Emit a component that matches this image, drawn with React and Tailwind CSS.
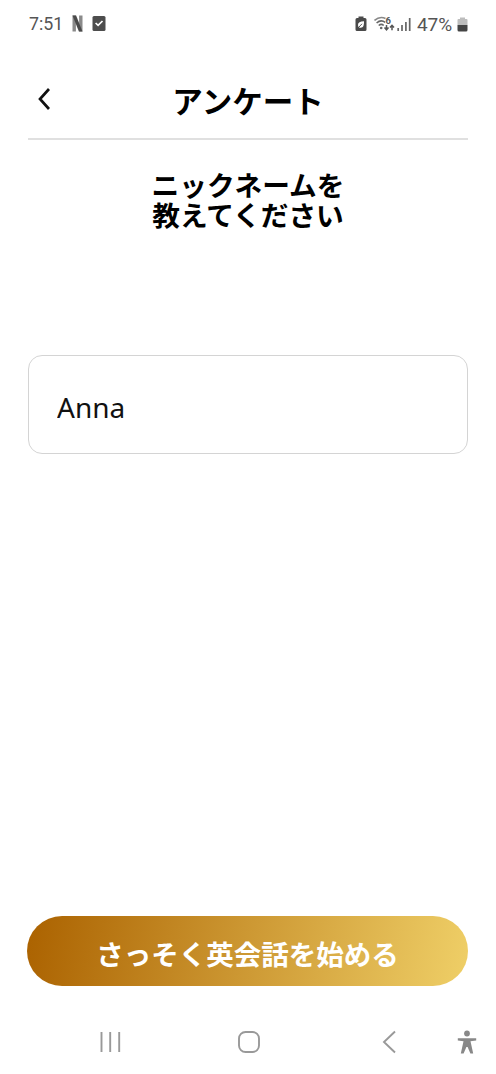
import React, { useState } from 'react';

const StatusBar = () => (
  <div className="h-[48px] pl-[29px] pr-[28px] flex items-center justify-between text-[#555555] font-['Roboto',sans-serif]">
    <div className="flex items-center">
      <span className="w-[43px] text-[17.8px] leading-none">7:51</span>
      <svg width="11" height="17" viewBox="0 0 11 17">
        <path d="M0.5 0.5h3.4v16H0.5zM7.100 0.500h3.400v16H7.100z" fill="#8a8a8a" />
        <path d="M0.5 0.5h3.600l6.400 16H6.900z" fill="#4a4a4a" />
      </svg>
      <svg className="ml-[9px]" width="14" height="17" viewBox="0 0 14 17">
        <rect x="0.5" y="1" width="13" height="15" rx="1.5" fill="#4d4d4d" />
        <path d="M3.6 8l2.5 2.4 4.4-4.4" fill="none" stroke="#fff" strokeWidth="1.7" />
      </svg>
    </div>
    <div className="flex items-center">
      <svg width="12" height="16" viewBox="0 0 12 16">
        <path d="M3.5 0.5h5v1.5H10a1.5 1.5 0 0 1 1.5 1.5v10A1.5 1.5 0 0 1 10 15H2a1.5 1.5 0 0 1-1.5-1.5v-10A1.5 1.5 0 0 1 2 2h1.5z" fill="#4a4a4a" />
        <path d="M9 5.3C5 5.3 3 6.5 3 9c0 2 1.200 2.800 2.600 2.800C8.500 11.800 9 9 9 5.300z" fill="#fff" />
        <path d="M2.8 12.3L7 7.8" stroke="#4a4a4a" strokeWidth="0.9" />
      </svg>
      <svg className="ml-[7px]" width="21" height="18" viewBox="0 0 21 18">
        <g fill="none" stroke="#888" strokeWidth="1.6">
          <path d="M0.5 5.500C4 2.300 8.500 2 11.500 3.500" />
          <path d="M2.6 8c2.800-2.500 6-2.500 8.600-0.700" stroke="#666" />
          <path d="M4.7 10.500c1.700-1.400 3.500-1.400 5 0" stroke="#666" />
        </g>
        <circle cx="7.2" cy="13" r="1.3" fill="#666" />
        <text x="11.6" y="8.500" fontSize="9.5" fontWeight="700" fill="#555">6</text>
        <path d="M12.500 10v4.500M10.500 12.600l2 2.200 2-2.200M18 15.200v-4.700M16 12.500l2-2.200 2 2.200" fill="none" stroke="#555" strokeWidth="1.5" />
      </svg>
      <svg className="ml-[2px]" width="14" height="15" viewBox="0 0 14 15">
        <path d="M1.2 11v3M5 8v6M8.9 5v9M12.7 1v13" stroke="#666" strokeWidth="1.7" />
      </svg>
      <span className="ml-[6px] w-[39px] text-[19px] leading-none tracking-[-0.1px]">47%</span>
      <svg className="ml-[1px]" width="11" height="15" viewBox="0 0 11 15">
        <path d="M3 0.5h5V2h1.500A1 1 0 0 1 10.500 3v5h-10V3a1 1 0 0 1 1-1H3z" fill="#bdbdbd" />
        <path d="M0.5 8h10v5a1.500 1.500 0 0 1-1.500 1.500H2A1.500 1.500 0 0 1 0.500 13z" fill="#444" />
      </svg>
    </div>
  </div>
);

const Header = () => (
  <header className="mx-[28px] h-[92px] grid grid-cols-[40px_1fr_40px] items-center border-b-2 border-[#e0e0e0]">
    <button type="button" aria-label="戻る" className="pl-[9px] pt-[11px]">
      <svg width="14" height="24" viewBox="0 0 14 24">
        <path d="M12 2L3 12l9 10" fill="none" stroke="#111" strokeWidth="2.7" />
      </svg>
    </button>
    <h1 className="mt-[14px] text-center text-[30.5px] leading-none font-bold">アンケート</h1>
  </header>
);

const NavigationBar = () => (
  <nav className="mt-[42px] h-[28px] pl-[99px] pr-[19px] flex items-center justify-between">
    <svg width="23" height="22" viewBox="0 0 23 22">
      <path d="M2.5 1v20M11.2 1v20M20.2 1v20" stroke="#999" strokeWidth="1.9" />
    </svg>
    <svg className="ml-[5px]" width="24" height="24" viewBox="0 0 24 24">
      <rect x="2" y="2" width="20" height="20" rx="6.5" fill="none" stroke="#999" strokeWidth="1.9" />
    </svg>
    <svg className="ml-[10px] -mr-[50px]" width="16" height="24" viewBox="0 0 16 24">
      <path d="M14 1.500L3 12l11 10.500" fill="none" stroke="#999" strokeWidth="1.9" />
    </svg>
    <svg width="20" height="25" viewBox="0 0 20 25">
      <circle cx="10" cy="3.500" r="2.900" fill="#888" />
      <path d="M0.8 8.200h18.400v2.300l-5.700 0.800 2.700 12.200h-2.800L10.600 17H9.400l-2.800 6.500H3.800l2.700-12.200-5.700-0.800z" fill="#888" />
    </svg>
  </nav>
);

const App = () => {
  const [nickname, setNickname] = useState('Anna');

  return (
    <div className="h-[1074px] w-[496px] flex flex-col overflow-hidden bg-white text-black font-['Noto_Sans_CJK_JP',sans-serif]">
      <StatusBar />
      <Header />
      <main className="flex-grow px-[28px]">
        <h2 className="pt-[29px] text-center text-[27.7px] leading-[30px] font-bold">
          ニックネームを
          <br />
          教えてください
        </h2>
        <input
          type="text"
          name="nickname"
          value={nickname}
          onChange={(e) => setNickname(e.target.value)}
          className="mt-[126px] block h-[99px] w-full rounded-[14px] border-[1.5px] border-[#d4d4d4] px-[28px] pt-[4px] text-[28px] text-[#111111] outline-none font-['Noto_Sans',sans-serif]"
        />
      </main>
      <div className="pl-[27px] pr-[28px]">
        <button
          type="button"
          className="h-[70px] w-full rounded-full bg-linear-[100deg,#ab6200,#efcf67] pt-[5px] text-[27.5px] leading-none font-bold text-white"
        >
          さっそく英会話を始める
        </button>
      </div>
      <div className="h-[88px]">
        <NavigationBar />
      </div>
    </div>
  );
};

export default App;
